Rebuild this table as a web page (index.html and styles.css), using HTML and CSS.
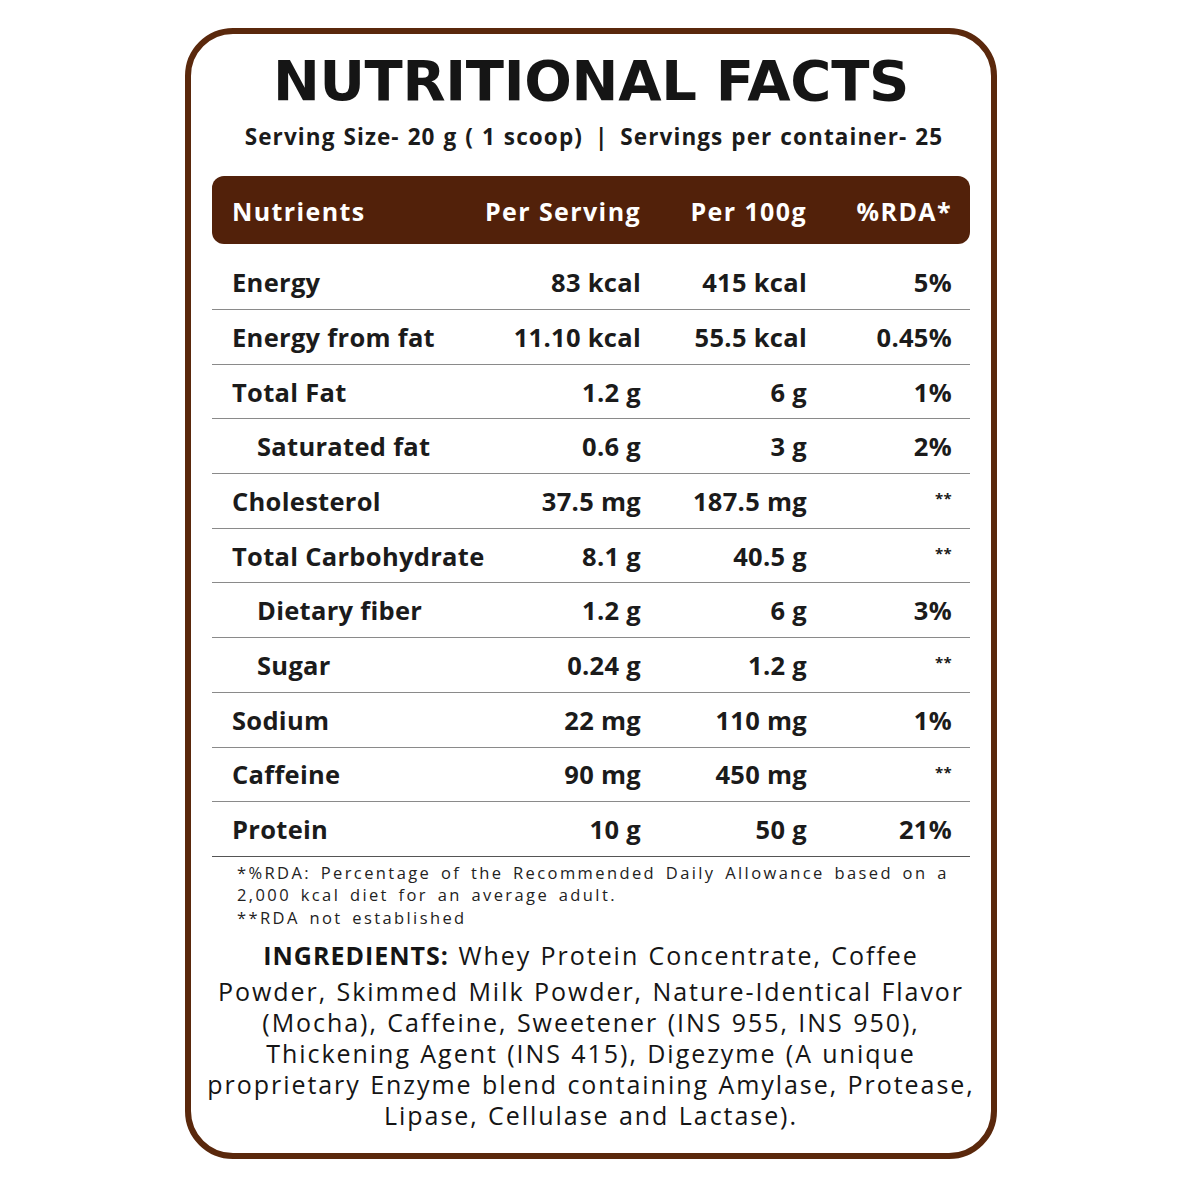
FILE: index.html
```html
<!DOCTYPE html>
<html>
<head>
<meta charset="utf-8">
<link rel="stylesheet" href="styles.css">
</head>
<body>
<div class="card">
  <h1 class="title">NUTRITIONAL FACTS</h1>
  <p class="serving">Serving Size- 20 g ( 1 scoop) <span class="sep">|</span> Servings per container- 25</p>
  <div class="table">
    <div class="row head">
      <div class="c1">Nutrients</div><div class="c2">Per Serving</div><div class="c3">Per 100g</div><div class="c4">%RDA*</div>
    </div>
    <div class="row first">
      <div class="c1">Energy</div><div class="c2">83 kcal</div><div class="c3">415 kcal</div><div class="c4">5%</div>
    </div>
    <div class="row">
      <div class="c1">Energy from fat</div><div class="c2">11.10 kcal</div><div class="c3">55.5 kcal</div><div class="c4">0.45%</div>
    </div>
    <div class="row">
      <div class="c1">Total Fat</div><div class="c2">1.2 g</div><div class="c3">6 g</div><div class="c4">1%</div>
    </div>
    <div class="row">
      <div class="c1 sub">Saturated fat</div><div class="c2">0.6 g</div><div class="c3">3 g</div><div class="c4">2%</div>
    </div>
    <div class="row">
      <div class="c1">Cholesterol</div><div class="c2">37.5 mg</div><div class="c3">187.5 mg</div><div class="c4 star">**</div>
    </div>
    <div class="row">
      <div class="c1">Total Carbohydrate</div><div class="c2">8.1 g</div><div class="c3">40.5 g</div><div class="c4 star">**</div>
    </div>
    <div class="row">
      <div class="c1 sub">Dietary fiber</div><div class="c2">1.2 g</div><div class="c3">6 g</div><div class="c4">3%</div>
    </div>
    <div class="row">
      <div class="c1 sub">Sugar</div><div class="c2">0.24 g</div><div class="c3">1.2 g</div><div class="c4 star">**</div>
    </div>
    <div class="row">
      <div class="c1">Sodium</div><div class="c2">22 mg</div><div class="c3">110 mg</div><div class="c4">1%</div>
    </div>
    <div class="row">
      <div class="c1">Caffeine</div><div class="c2">90 mg</div><div class="c3">450 mg</div><div class="c4 star">**</div>
    </div>
    <div class="row">
      <div class="c1">Protein</div><div class="c2">10 g</div><div class="c3">50 g</div><div class="c4">21%</div>
    </div>
  </div>
  <div class="notes">
    <p>*%RDA: Percentage of the Recommended Daily Allowance based on a<br>2,000 kcal diet for an average adult.</p>
    <p>**RDA not established</p>
  </div>
  <div class="ingredients">
    <p class="ing-first"><b>INGREDIENTS:</b> Whey Protein Concentrate, Coffee</p>
    <p class="ing-rest">Powder, Skimmed Milk Powder, Nature-Identical Flavor<br>(Mocha), Caffeine, Sweetener (INS 955, INS 950),<br>Thickening Agent (INS 415), Digezyme (A unique<br>proprietary Enzyme blend containing Amylase, Protease,<br>Lipase, Cellulase and Lactase).</p>
  </div>
</div>
</body>
</html>
```
FILE: styles.css
```css
* { box-sizing: border-box; }
html, body { margin: 0; padding: 0; background: #fff; }
body {
  width: 1181px;
  height: 1181px;
  font-family: "Open Sans", "DejaVu Sans", sans-serif;
  color: #1b1b1b;
}
.card {
  margin: 28px 0 0 185px;
  width: 812px;
  height: 1131px;
  border: 6px solid #5a280c;
  border-radius: 48px;
  padding: 0 21px;
}
.title {
  margin: 15px 0 0;
  text-align: center;
  font-family: "DejaVu Sans", sans-serif;
  font-weight: 900;
  font-size: 56px;
  line-height: 64px;
  letter-spacing: -0.3px;
  color: #151515;
}
.serving {
  margin: 9px 0 0 6px;
  text-align: center;
  font-weight: 700;
  font-size: 22.5px;
  line-height: 30px;
  letter-spacing: 1.1px;
  word-spacing: 1px;
}
.sep { margin: 0 4px; }
.table { margin-top: 24px; }
.row {
  display: grid;
  grid-template-columns: 237px 172px 166px 145px;
  padding: 0 17px 0 20px;
  height: 54.7px;
  align-items: center;
  border-bottom: 1px solid #8a8a8a;
  font-weight: 700;
  font-size: 25.5px;
  letter-spacing: 0.3px;
}
.row.head {
  height: 68px;
  background: #52210a;
  color: #fff;
  border-radius: 12px;
  border-bottom: none;
  padding-top: 2px;
  font-size: 25px;
  letter-spacing: 1.4px;
  padding-right: 15px;
}
.row.first { height: 66px; padding-top: 10px; }
.row:last-child { border-bottom-color: #555; }
.c2, .c3, .c4 { text-align: right; }
.c1 { white-space: nowrap; }
.sub { padding-left: 25px; }
.star { font-size: 15px; align-self: start; padding-top: 14px; }
.row.first .star { padding-top: 4px; }
.notes {
  padding: 5px 0 0 25px;
  font-size: 16.5px;
  line-height: 22.5px;
  letter-spacing: 2.4px;
  word-spacing: 3px;
  color: #222;
  white-space: nowrap;
}
.notes p { margin: 0; }
.ingredients {
  margin: 11px -20px 0;
  text-align: center;
  font-size: 25px;
  line-height: 31px;
  letter-spacing: 1.95px;
  word-spacing: 1px;
  color: #151515;
  white-space: nowrap;
}
.ingredients p { margin: 0; }
.ingredients b { letter-spacing: 1px; }
.ing-first { margin-bottom: 5px !important; }
```
